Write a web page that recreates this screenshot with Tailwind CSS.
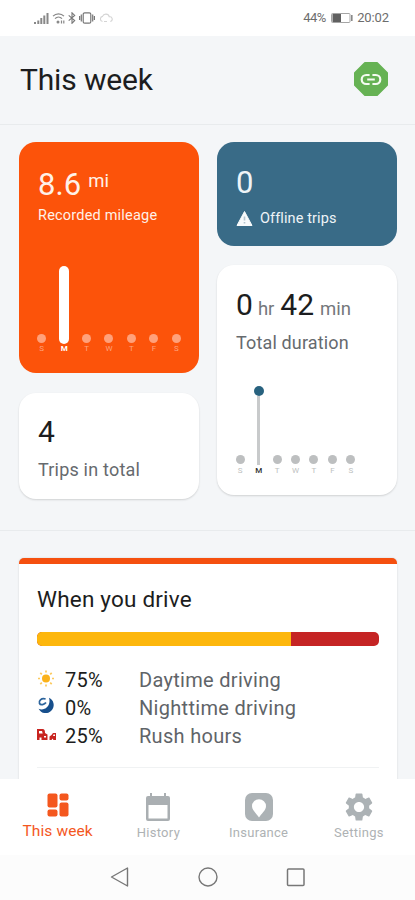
<!DOCTYPE html>
<html lang="en">
<head>
  <meta charset="UTF-8" />
  <meta name="viewport" content="width=device-width, initial-scale=1" />
  <title>This week</title>

  <script src="https://cdn.jsdelivr.net/npm/@tailwindcss/browser@4"></script>
</head>
<body class="bg-[#f4f6f8] font-['Roboto',sans-serif] text-[#1c1d20] h-[900px] flex flex-col overflow-hidden">
  <!-- Status bar -->
  <div class="h-9 shrink-0 bg-white flex items-center justify-between pl-[34px] pr-[26px] text-[#6d6d6d]">
    <div class="flex items-center gap-[3px]">
      <svg class="w-[15px] h-3" viewBox="0 0 15 12" fill="#888"><path d="M0 10h2v2H0zM3.3 8.5h2V12h-2zM6.3 6h2v6h-2zM9.3 3.5h2V12h-2zM12.5 1h2v11h-2z"/></svg>
      <svg class="w-[13px] h-3" viewBox="0 0 13 12" fill="none" stroke="#888" stroke-width="1.2"><path d="M1 4.2C4 1 9 1 12 4.2M3 6.6c2-2 5-2 7 0"/><circle cx="6" cy="10" r=".9" fill="#888"/><path d="M9.5 8.500v3M11.8 8.500v3"/></svg>
      <svg class="w-2 h-3" viewBox="0 0 8 12" fill="none" stroke="#777" stroke-width="1.1"><path d="M.7 3.3l6 5.2L4 11.3V.8l2.7 2.6-6 5.2"/></svg>
      <svg class="w-4 h-3" viewBox="0 0 16 12" fill="none" stroke="#777" stroke-width="1.2"><rect x="4.2" y=".8" width="7.6" height="10.4" rx="1.5"/><path d="M2.3 2.5v7M13.7 2.5v7M.6 4v4M15.4 4v4"/></svg>
      <svg class="w-[14px] h-3 ml-px" viewBox="0 0 14 12" fill="none" stroke="#d4d4d4" stroke-width="1.1"><path d="M3.5 9.5a2.6 2.6 0 010-5.1 3.6 3.6 0 016.8.4 2.4 2.4 0 011 4.7M5 9.5h3"/></svg>
    </div>
    <div class="flex items-center text-[13px] leading-4">
      <span class="w-[28px] tracking-[-0.5px]">44%</span>
      <svg class="w-[22px] h-[10px]" viewBox="0 0 22 10"><rect x=".5" y=".5" width="18.5" height="9" rx="1" fill="none" stroke="#a5a5a5"/><path d="M1.5 1h8.5v8H1.5z" fill="#606060"/><path d="M20 2h1.6v6H20z" fill="#888"/></svg>
      <span class="ml-[4px] tracking-[-0.1px]">20:02</span>
    </div>
  </div>

  <header class="h-[89px] shrink-0 flex justify-between items-center pl-5 pr-[27px] border-b border-[#e8ebed]">
    <h1 class="text-[30px] leading-9 tracking-[-0.15px]">This week</h1>
    <svg class="w-[34px] h-[34px] -mt-0.5" viewBox="0 0 34 34"><path d="M11 1h12l10 10v12L23 33H11L1 23V11z" fill="#66b254" stroke="#66b254" stroke-width="2" stroke-linejoin="round"/><path d="M15.6 13h-3.4a4.5 4.5 0 000 9h3.4M18.4 13h3.4a4.5 4.5 0 010 9h-3.4M13.2 17.5h7.6" fill="none" stroke="#f5fbf1" stroke-width="2.2"/></svg>
  </header>

  <!-- Summary cards -->
  <section class="h-[406px] shrink-0 flex gap-[18px] pl-[19px] pr-[18px] pt-[17px] border-b border-[#e8ebed]">
    <div class="w-[180px] flex flex-col gap-5">
      <div class="h-[231px] rounded-[17px] bg-[#fc530a] text-[#fff1e8] pt-[25px] px-[19px] flex flex-col">
        <div class="flex gap-[6px]"><span class="text-[31px] leading-9 tracking-[0.1px]">8.6</span><span class="text-[18.5px] leading-7 ml-px">mi</span></div>
        <p class="text-[14.5px] leading-5 mt-[3px] tracking-[0.2px] whitespace-nowrap">Recorded mileage</p>
        <div id="mileage" class="mt-auto mb-[19px] -mx-[7.5px] w-[157px] grid grid-cols-7 items-end"></div>
      </div>
      <div class="h-[106px] rounded-[17px] bg-white shadow-[0_1px_2px_rgba(0,0,0,0.15)] pt-[21px] px-[19px]">
        <p class="text-[30px] leading-9">4</p>
        <p class="text-[18px] leading-6 mt-2 text-[#666a6e] tracking-[0.2px]">Trips in total</p>
      </div>
    </div>

    <div class="w-[180px] flex flex-col gap-[19px]">
      <div class="h-[104px] rounded-[17px] bg-[#396b87] text-[#eef4f7] pt-[23px] px-[19px]">
        <p class="text-[31px] leading-9">0</p>
        <p class="flex items-center text-[14.5px] leading-5 mt-2 tracking-[0.1px]">
          <svg class="w-[17px] h-[17px] mr-[7px] -mt-0.5" viewBox="0 0 17 17"><path d="M8.5 1.5l7.5 14H1z" fill="#f7fafb" stroke="#f7fafb" stroke-linejoin="round"/><path d="M8.5 6.5v4M8.5 12v1.5" stroke="#b3c4ce" stroke-width="1.6"/></svg>
          Offline trips
        </p>
      </div>
      <div class="h-[230px] rounded-[17px] bg-white shadow-[0_1px_2px_rgba(0,0,0,0.15)] pt-[22px] px-[19px] flex flex-col">
        <p class="flex items-baseline leading-9 text-[30px] whitespace-nowrap">
          0<span class="text-[18.5px] text-[#74777b] ml-[5px] mr-[6px]">hr</span>42<span class="text-[18.5px] text-[#74777b] ml-[6px]">min</span>
        </p>
        <p class="text-[18px] leading-6 mt-1 text-[#666a6e] tracking-[0.15px] whitespace-nowrap">Total duration</p>
        <div id="duration" class="mt-auto mb-[19px] -ml-[5px] w-[129px] grid grid-cols-7 items-end"></div>
      </div>
    </div>
  </section>

  <!-- When you drive -->
  <section class="h-[248px] shrink-0 pt-[27px] pl-[19px] pr-[18px] overflow-hidden">
    <div class="h-[260px] rounded-t-[5px] bg-white border-t-[6px] border-[#f5500f] shadow-[0_0_2px_rgba(0,0,0,0.15)] px-[18px] pt-[21px]">
      <h2 class="text-[22.5px] leading-7 tracking-[0.2px]">When you drive</h2>
      <div class="flex h-[14px] mt-[19px] rounded-[5px] overflow-hidden bg-[#c52424]">
        <div class="bg-[#fdb70d]" style="width: 74.4%"></div>
      </div>
      <div class="mt-[20px] pb-[17px] border-b border-[#f0f2f3] text-[20px] leading-7">
        <div class="flex items-center">
          <svg class="w-[18px] h-[18px] mr-[10px] -mt-0.5" viewBox="0 0 18 18"><circle cx="9" cy="8.5" r="4" fill="#fbb21a"/><path d="M9 .5v2M9 14.5v2M1 8.5h2M15 8.5h2M3.3 2.8l1.5 1.5M13.2 12.7l1.5 1.5M3.3 14.2l1.5-1.5M13.2 4.3l1.5-1.5" stroke="#fcc95c" stroke-width="1.7"/></svg>
          <span class="w-[74px] tracking-[0.2px]">75%</span><span class="text-[#5f6468] tracking-[0.3px]">Daytime driving</span>
        </div>
        <div class="flex items-center">
          <svg class="w-[18px] h-[18px] mr-[10px] -mt-1" viewBox="0 0 18 18"><path d="M12 .8a8 8 0 11-10.400 11c5.600 2.700 12.900-3 10.400-11z" fill="#174f8c"/><path d="M8.600 2C4 .8 1.500 4 2.500 6.300S7.500 7.500 9 5.500" fill="none" stroke="#2c649c" stroke-width="1.800"/></svg>
          <span class="w-[74px] tracking-[0.2px]">0%</span><span class="text-[#5f6468] tracking-[0.3px]">Nighttime driving</span>
        </div>
        <div class="flex items-center">
          <svg class="w-5 h-[14px] mr-2 -mt-0.5" viewBox="0 0 20 14"><path d="M0 1h5.500c2 0 2.500 1.500 2.500 4l2.500 1.500V12H0z" fill="#c82420"/><path d="M2 3h3l.7 2.500H2zM7 8h2v1.500H7z" fill="#fff"/><path d="M2.500 9.500h2V12h-2z" fill="#fff"/><path d="M12.500 8.500l2-1.500 1.500-2h3v7h-2.500l-1-1.500-1 1.500h-2z" fill="#c82420"/><path d="M16.500 6.500h1.500V8h-2z" fill="#fff"/></svg>
          <span class="w-[74px] tracking-[0.2px]">25%</span><span class="text-[#5f6468] tracking-[0.3px]">Rush hours</span>
        </div>
      </div>
    </div>
  </section>

  <!-- Bottom tabs -->
  <nav class="h-[76px] shrink-0 bg-white grid grid-cols-4 pl-2 pr-[6px] pt-[14px] text-center text-[13px] leading-5 text-[#aeb2b4] tracking-[0.3px]">
    <a class="flex flex-col items-center text-[#f4571e] text-[15.5px] tracking-[0.1px]">
      <svg class="w-6 h-6" viewBox="0 0 24 24" fill="currentColor"><rect x="1.500" y=".5" width="10" height="14" rx="2"/><rect x="13.500" y=".5" width="9" height="7" rx="2"/><rect x="1.500" y="16.500" width="10" height="7" rx="2"/><rect x="13.500" y="9.500" width="9" height="14" rx="2"/></svg>
      <span class="mt-1 -ml-px">This week</span>
    </a>
    <a class="flex flex-col items-center">
      <svg class="w-6 h-7" viewBox="0 0 24 28"><path d="M4 0h2v3h12V0h2v3h2a2 2 0 012 2v21a2 2 0 01-2 2H2a2 2 0 01-2-2V5a2 2 0 012-2h2z" fill="#aaafb2"/><path d="M2.500 12h19v13.500h-19z" fill="#fff"/></svg>
      <span class="mt-[2px]">History</span>
    </a>
    <a class="flex flex-col items-center">
      <svg class="w-7 h-7" viewBox="0 0 28 28"><rect width="28" height="28" rx="7" fill="#acb2b5"/><path d="M14 24.500c-2-3.500-7-7-7-11.200a7 7 0 0114 0c0 4.200-5 7.700-7 11.200z" fill="#fff"/></svg>
      <span class="mt-[2px]">Insurance</span>
    </a>
    <a class="flex flex-col items-center">
      <svg class="w-[34px] h-[34px] -my-[3px]" viewBox="0 0 24 24" fill="#acb2b5"><path d="M19.140 12.940c.04-.3.06-.61.06-.94 0-.32-.02-.64-.07-.94l2.030-1.580c.18-.14.23-.41.12-.61l-1.920-3.320c-.12-.22-.37-.29-.59-.22l-2.390.96c-.5-.38-1.030-.7-1.620-.94l-.36-2.540c-.04-.24-.24-.41-.48-.41h-3.840c-.24 0-.43.17-.47.41l-.36 2.540c-.59.24-1.130.57-1.620.94l-2.390-.96c-.22-.08-.47 0-.59.22L2.740 8.870c-.12.21-.08.47.12.61l2.030 1.580c-.05.3-.09.63-.09.94s.02.64.07.94l-2.030 1.580c-.18.14-.23.41-.12.61l1.920 3.320c.12.22.37.29.59.22l2.390-.96c.5.38 1.030.7 1.620.94l.36 2.540c.05.24.24.41.48.41h3.840c.24 0 .44-.17.47-.41l.36-2.540c.59-.24 1.130-.56 1.620-.94l2.390.96c.22.08.47 0 .59-.22l1.920-3.320c.12-.22.07-.47-.12-.61l-2.010-1.580zM12 15.600c-1.980 0-3.600-1.620-3.600-3.600s1.620-3.600 3.600-3.600 3.600 1.620 3.600 3.600-1.620 3.600-3.600 3.600z"/></svg>
      <span class="mt-[2px]">Settings</span>
    </a>
  </nav>

  <!-- System buttons -->
  <div class="h-[45px] shrink-0 bg-[#fcfcfc] flex justify-center gap-[68px] pt-3">
    <svg class="w-5 h-5" viewBox="0 0 20 20" fill="none" stroke="#777" stroke-width="1.400" stroke-linejoin="round"><path d="M17.500 1v18L1.500 10z"/></svg>
    <svg class="w-5 h-5" viewBox="0 0 20 20" fill="none" stroke="#777" stroke-width="1.400"><circle cx="10" cy="10" r="9"/></svg>
    <svg class="w-5 h-5" viewBox="0 0 20 20" fill="none" stroke="#777" stroke-width="1.500"><rect x="1.500" y="2" width="16.500" height="16.500" rx="1"/></svg>
  </div>

  <script>
    const days = ['S', 'M', 'T', 'W', 'T', 'F', 'S'];
    const active = 1;

    document.getElementById('mileage').innerHTML = days.map((day, i) => `
      <div class="flex flex-col items-center text-[8px] leading-[10px]">
        ${i === active
          ? '<div class="w-[10px] h-[78px] rounded-full bg-white"></div><span class="font-bold text-white">' + day + '</span>'
          : '<div class="w-[9px] h-[9px] rounded-full bg-[#ffa17b]"></div><span class="mt-px text-[#ffa17b]">' + day + '</span>'}
      </div>`).join('');

    document.getElementById('duration').innerHTML = days.map((day, i) => `
      <div class="flex flex-col items-center text-[8px] leading-[10px]">
        ${i === active
          ? '<div class="w-[10px] h-[10px] rounded-full bg-[#28627f]"></div><div class="w-[3px] h-[69px] bg-[#c8cacb]"></div><span class="mt-px font-medium text-[#333]">' + day + '</span>'
          : '<div class="w-[9px] h-[9px] rounded-full bg-[#bdbfc0]"></div><span class="mt-[2px] text-[#bdbfc0]">' + day + '</span>'}
      </div>`).join('');
  </script>
</body>
</html>
